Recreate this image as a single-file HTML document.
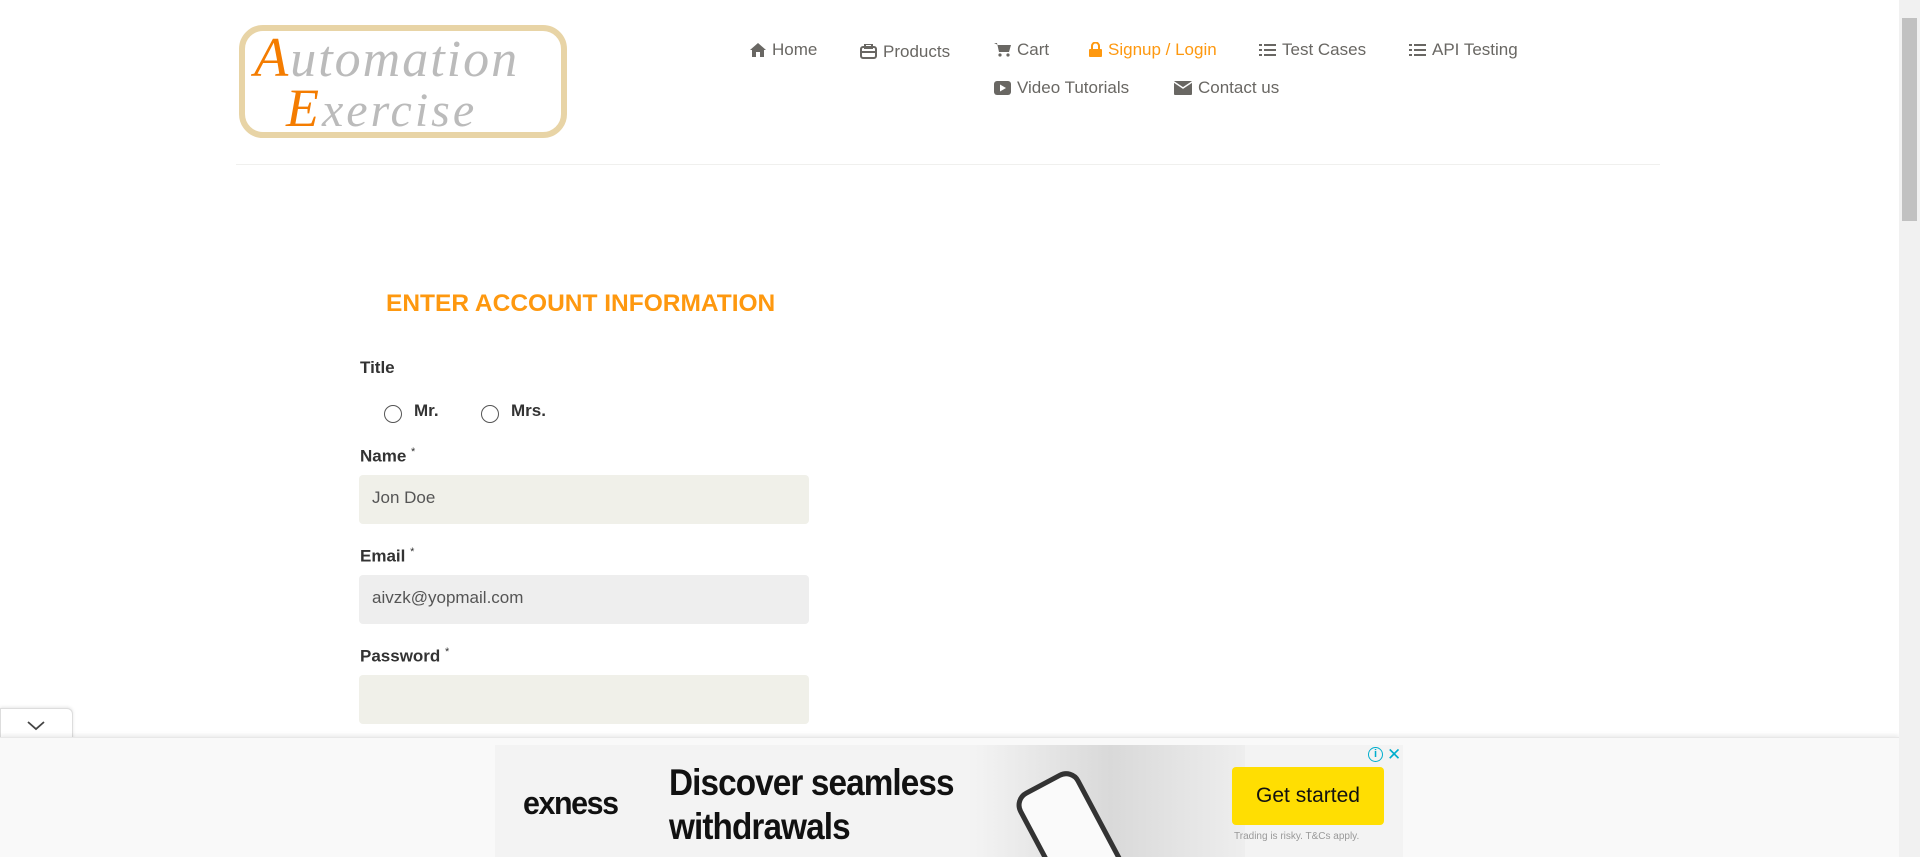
<!DOCTYPE html>
<html style="overflow:hidden"><head><meta charset="utf-8"><style>
*{margin:0;padding:0;box-sizing:border-box}
body{width:1920px;height:857px;overflow:hidden;background:#fff;font-family:"Liberation Sans",Arial,sans-serif;position:relative;color:#696763}
.abs{position:absolute}
.nav{font-size:17px;color:#696763;white-space:nowrap}
.nav svg{vertical-align:-2px;margin-right:6px}
.lbl{font-size:17px;font-weight:bold;color:#333}
.lbl sup{font-weight:normal;font-size:11px}
.inp{position:absolute;left:359px;width:450px;height:49px;border-radius:4px;font-size:17px;color:#555;padding:13px 13px}
.radio{position:absolute;width:18px;height:18px;border:1.5px solid #555;border-radius:50%;background:#fff}
</style></head><body>
<!-- logo -->
<div class="abs" style="left:239px;top:25px;width:328px;height:113px;border:6px solid #e8d4a6;border-radius:24px;background:#fff"></div>
<div class="abs" style="left:254px;top:32px;font-family:'Liberation Serif',serif;font-style:italic;font-size:52px;color:#bbb;letter-spacing:2px;line-height:52px"><span style="color:#f47c00;font-size:56px">A</span>utomation</div>
<div class="abs" style="left:286px;top:84px;font-family:'Liberation Serif',serif;font-style:italic;font-size:48px;color:#bbb;letter-spacing:3px;line-height:48px"><span style="color:#f47c00;font-size:54px">E</span>xercise</div>
<!-- nav -->
<div class="abs nav" style="left:750px;top:40px"><svg width="16" height="14" viewBox="0 0 16 14"><path d="M8 0L0 7h2v7h4V9h4v5h4V7h2z" fill="#696763"/></svg>Home</div>
<div class="abs nav" style="left:860px;top:42px"><svg width="17" height="15" viewBox="0 0 17 15"><rect x="1" y="3" width="15" height="11" rx="2" fill="none" stroke="#696763" stroke-width="2"/><rect x="5" y="0" width="7" height="4" fill="none" stroke="#696763" stroke-width="2"/><path d="M1 8h15" stroke="#696763" stroke-width="2"/></svg>Products</div>
<div class="abs nav" style="left:994px;top:40px"><svg width="17" height="15" viewBox="0 0 17 15"><path d="M0 1h3l2 9h10l2-7H4" fill="#696763"/><circle cx="6" cy="13" r="1.6" fill="#696763"/><circle cx="14" cy="13" r="1.6" fill="#696763"/></svg>Cart</div>
<div class="abs nav" style="left:1089px;top:40px;color:#fe980f"><svg width="13" height="15" viewBox="0 0 13 15"><path d="M3 7V4a3.5 3.5 0 017 0v3" fill="none" stroke="#fe980f" stroke-width="2"/><rect x="0" y="7" width="13" height="8" rx="1" fill="#fe980f"/></svg>Signup / Login</div>
<div class="abs nav" style="left:1259px;top:40px"><svg width="17" height="14" viewBox="0 0 17 14"><path d="M0 1h3v2H0zM5 1h12v2H5zM0 6h3v2H0zM5 6h12v2H5zM0 11h3v2H0zM5 11h12v2H5z" fill="#696763"/></svg>Test Cases</div>
<div class="abs nav" style="left:1409px;top:40px"><svg width="17" height="14" viewBox="0 0 17 14"><path d="M0 1h3v2H0zM5 1h12v2H5zM0 6h3v2H0zM5 6h12v2H5zM0 11h3v2H0zM5 11h12v2H5z" fill="#696763"/></svg>API Testing</div>
<div class="abs nav" style="left:994px;top:78px"><svg width="17" height="14" viewBox="0 0 17 14"><rect width="17" height="14" rx="3" fill="#696763"/><path d="M6 3.5v7l6-3.5z" fill="#fff"/></svg>Video Tutorials</div>
<div class="abs nav" style="left:1174px;top:78px"><svg width="18" height="14" viewBox="0 0 18 14"><rect width="18" height="14" rx="1" fill="#696763"/><path d="M0 1l9 6 9-6" fill="none" stroke="#fff" stroke-width="1.5"/></svg>Contact us</div>
<div class="abs" style="left:236px;top:164px;width:1424px;height:1px;background:#f0f0ee"></div>
<!-- form -->
<div class="abs" style="left:386px;top:290px;font-size:24.5px;font-weight:bold;color:#fe980f">ENTER ACCOUNT INFORMATION</div>
<div class="abs lbl" style="left:360px;top:358px">Title</div>
<div class="radio" style="left:384px;top:405px"></div>
<div class="abs lbl" style="left:414px;top:401px">Mr.</div>
<div class="radio" style="left:481px;top:405px"></div>
<div class="abs lbl" style="left:511px;top:401px">Mrs.</div>
<div class="abs lbl" style="left:360px;top:446px">Name <sup>*</sup></div>
<div class="inp" style="top:475px;background:#f0f0e9">Jon Doe</div>
<div class="abs lbl" style="left:360px;top:546px">Email <sup>*</sup></div>
<div class="inp" style="top:575px;background:#eee">aivzk@yopmail.com</div>
<div class="abs lbl" style="left:360px;top:646px">Password <sup>*</sup></div>
<div class="inp" style="top:675px;background:#f0f0e9"></div>
<!-- ad bar -->
<div class="abs" style="left:0;top:708px;width:73px;height:32px;background:#fff;border:1px solid #ddd;border-bottom:none;border-radius:0 6px 0 0;box-shadow:0 -1px 3px rgba(0,0,0,.1)"><svg class="abs" style="left:26px;top:12px" width="18" height="10" viewBox="0 0 18 10"><path d="M1 1l8 7 8-7" fill="none" stroke="#444" stroke-width="1.8"/></svg></div>
<div class="abs" style="left:0;top:737px;width:1899px;height:120px;background:#f9f9f9;box-shadow:0 -2px 4px rgba(0,0,0,.08);border-top:1px solid #e8e8e8"></div>
<div class="abs" style="left:495px;top:745px;width:908px;height:112px;background:#f3f3f3;overflow:hidden">
 <div class="abs" style="left:480px;top:0;width:270px;height:112px;background:linear-gradient(90deg,#f3f3f3,#d9d9d9 50%,#eee)"></div>
 <div class="abs" style="left:540px;top:30px;width:70px;height:120px;border:5px solid #333;border-radius:16px;background:#fafafa;transform:rotate(-28deg)"></div>
 <div class="abs" style="left:28px;top:40px;font-size:32px;color:#111;letter-spacing:-1.5px;font-weight:bold;transform:scaleX(0.95);transform-origin:left">exness</div>
 <div class="abs" style="left:174px;top:16px;font-size:37px;color:#111;line-height:44px;letter-spacing:-1px;font-weight:bold;transform:scaleX(0.9);transform-origin:left">Discover seamless<br>withdrawals</div>
 <div class="abs" style="left:737px;top:22px;width:152px;height:58px;background:#ffde02;border-radius:4px;font-size:21px;color:#111;text-align:center;line-height:58px">Get started</div>
 <div class="abs" style="left:739px;top:86px;font-size:10px;color:#999">Trading is risky. T&amp;Cs apply.</div>
 <div class="abs" style="left:873px;top:2px;width:15px;height:15px;border:1.5px solid #00aecd;border-radius:50%;color:#00aecd;font-size:11px;text-align:center;line-height:12px;font-weight:bold">i</div>
 <div class="abs" style="left:892px;top:0;color:#00aecd;font-size:17px">✕</div>
</div>
<!-- scrollbar -->
<div class="abs" style="left:1899px;top:0;width:21px;height:857px;background:#f1f1f1"></div>
<div class="abs" style="left:1902px;top:18px;width:15px;height:203px;background:#c1c1c1"></div>
</body></html>
